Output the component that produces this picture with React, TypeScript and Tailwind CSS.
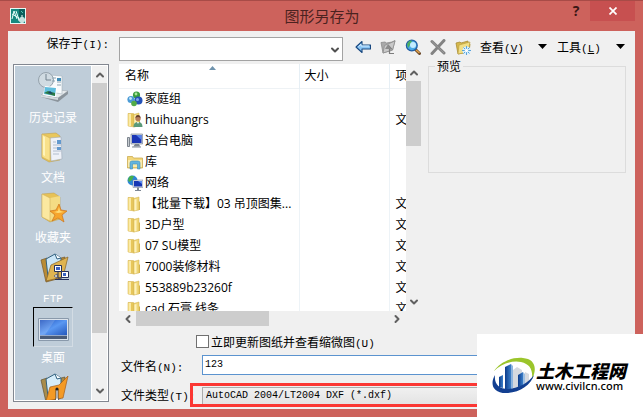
import { useState, type ReactNode } from 'react';
import { ChevronDown, ChevronLeft, ChevronRight, ChevronUp } from 'lucide-react';
import clsx from 'clsx';

type Kind = 'homegroup' | 'user' | 'computer' | 'library' | 'network' | 'folder';

interface Entry {
  name: string;
  kind: Kind;
  type?: string;
}

const entries: Entry[] = [
  { name: '家庭组', kind: 'homegroup' },
  { name: 'huihuangrs', kind: 'user', type: '文' },
  { name: '这台电脑', kind: 'computer' },
  { name: '库', kind: 'library' },
  { name: '网络', kind: 'network' },
  { name: '【批量下载】03 吊顶图集...', kind: 'folder', type: '文' },
  { name: '3D户型', kind: 'folder', type: '文' },
  { name: '07 SU模型', kind: 'folder', type: '文' },
  { name: '7000装修材料', kind: 'folder', type: '文' },
  { name: '553889b23260f', kind: 'folder', type: '文' },
  { name: 'cad 石膏 线条', kind: 'folder', type: '文' }
];

function Mono({ children }: { children: ReactNode }) {
  return (
    <span className="font-['Liberation_Mono',monospace] text-[11px] leading-none">
      {children}
    </span>
  );
}

function AppIcon() {
  return (
    <svg viewBox="0 0 16 16" className="size-4">
      <rect width="16" height="16" fill="#e9f6f3" />
      <rect x="1" y="1" width="14" height="14" fill="#17897f" />
      <path d="M9 1h6v8H9z" fill="#0b5f5c" />
      <path d="M2 11 4 3l3 8M6 3l3 9M2 6l7 4" stroke="#e9fffb" fill="none" />
      <path d="M10 10h4v4h-4zM12 7v8M8 12h7" stroke="#fff" fill="none" />
      <path d="M11 3l2 2" stroke="#54c7b6" />
    </svg>
  );
}

function BackIcon() {
  return (
    <svg viewBox="0 0 16 16" className="size-4">
      <path
        d="M1 8 7 2.5V6h8.5v4H7v3.5z"
        fill="#8cc6f5"
        stroke="#17477f"
        strokeWidth="1.1"
        strokeLinejoin="round"
      />
      <path d="M3.5 7.5 6 5.2V7h8" stroke="#d3ecff" fill="none" />
    </svg>
  );
}

function UpFolderIcon() {
  return (
    <svg viewBox="0 0 16 16" className="size-4">
      <path
        d="M1 3.500 5 3l1.500 1L12 3l3-1.500L12.500 11 3 14z"
        fill="#a9a9a9"
        stroke="#8b8b8b"
        strokeWidth=".8"
      />
      <path d="M3 14 4.500 6.500 15 2l-2.500 9z" fill="#c9c9c9" stroke="#8e8e8e" strokeWidth=".8" />
      <path d="m8 6 3.500 4H9.500v4.500H14" fill="none" stroke="#7c7c7c" strokeWidth="1.200" />
      <path d="m8 5.500 3.500 4.500H5z" fill="#8b8b8b" />
    </svg>
  );
}

function SearchWebIcon() {
  return (
    <svg viewBox="0 0 16 16" className="size-4">
      <path d="m10 10 4.5 4.5" stroke="#6d4a2b" strokeWidth="3" strokeLinecap="round" />
      <path d="m11 11 3.5 3" stroke="#e2a24a" strokeWidth="1.4" />
      <circle cx="6.8" cy="6.5" r="5.4" fill="#4aa9e6" stroke="#225fa5" strokeWidth="1.3" />
      <path d="M2 5c2-4 4-4 5-3L5 6 3 9z" fill="#4daf62" />
      <circle cx="8" cy="6" r="3" fill="#c3ecff" />
    </svg>
  );
}

function DeleteIcon() {
  return (
    <svg viewBox="0 0 16 16" className="size-4">
      <path
        d="m2 2.500 12 11.500M14 1.500 2 14.500"
        stroke="#838383"
        strokeWidth="3"
        strokeLinecap="round"
      />
      <path d="m2 2.500 12 11.500" stroke="#9b9b9b" />
    </svg>
  );
}

function NewFolderIcon() {
  return (
    <svg viewBox="0 0 16 16" className="size-4">
      <path d="M1 4 5 3l1 1 7-2v2l2 1-1 8-11 2z" fill="#d5b84b" stroke="#a98d36" strokeWidth=".8" />
      <path d="m3 15 1-9 11-3-2 10z" fill="#f2df86" stroke="#b99c3e" strokeWidth=".6" />
      <circle cx="11.5" cy="11.5" r="4" fill="#d6efff" />
      <path
        d="M11.5 7v9M7 11.5h9M8.5 8.5l6 6M14.5 8.5l-6 6"
        stroke="#4c9ad6"
        strokeWidth=".9"
      />
      <circle cx="11.5" cy="11.5" r="1.7" fill="#fff" />
    </svg>
  );
}

function Caret() {
  return (
    <svg viewBox="0 0 9 5" className="h-[5px] w-[9px]">
      <path d="M0 0h9L4.500 5z" fill="#000" />
    </svg>
  );
}

function EntryIcon({ kind }: { kind: Kind }) {
  if (kind === 'homegroup') {
    return (
      <svg viewBox="0 0 16 16" className="size-4 shrink-0">
        <circle cx="9.500" cy="4" r="3.600" fill="#3a9c3d" />
        <circle cx="4" cy="8.500" r="3.600" fill="#4b9bd6" />
        <circle cx="11.500" cy="9.500" r="4" fill="#2452b8" />
        <circle cx="7" cy="12.500" r="2.800" fill="#52ab48" />
        <circle cx="9" cy="3" r="1.400" fill="#a9e69a" />
        <circle cx="3.500" cy="7.500" r="1.400" fill="#c5e8fb" />
        <circle cx="10.500" cy="8.500" r="1.500" fill="#7da9ee" />
      </svg>
    );
  }
  if (kind === 'computer') {
    return (
      <svg viewBox="0 0 16 16" className="size-4 shrink-0">
        <path d="M.5 4.500h2v9h-2z" fill="#c7ccd1" stroke="#7d858e" />
        <path d="M4 1h11.500v10H4z" fill="#cfd6de" stroke="#6f7b8c" strokeWidth=".6" />
        <path d="M5 2h9.500v8H5z" fill="#1a35b5" />
        <path d="M9 2h5.500v5z" fill="#5480ea" />
        <path d="M8 11h4l1.500 3H6z" fill="#7d858e" />
        <path d="M5 14h9" stroke="#aab1b9" strokeWidth="1.500" />
      </svg>
    );
  }
  if (kind === 'network') {
    return (
      <svg viewBox="0 0 16 16" className="size-4 shrink-0">
        <circle cx="5.500" cy="5.500" r="5" fill="#2c86d8" />
        <path d="M2 2c2-2 4-1 5-1L5 5 2 7 1 5zM6 7l3-1-2 4z" fill="#48b04c" />
        <path d="M6 5h10v7.500H6z" fill="#dfe5ee" stroke="#6c7893" strokeWidth=".5" />
        <path d="M7 6h8v5.500H7z" fill="#1737b4" />
        <path d="M11 6h4v3z" fill="#5c8cf0" />
        <path d="M10 12.500h2V15h2v1H8v-1h2z" fill="#7c8694" />
      </svg>
    );
  }
  if (kind === 'library') {
    return (
      <svg viewBox="0 0 16 16" className="size-4 shrink-0">
        <path d="M.5 2.500h5l1 1.500h9V14H.5z" fill="#f2d77b" stroke="#c6a344" strokeWidth=".7" />
        <path d="M1 6h14v7H1z" fill="#fbebac" />
        <path d="M3 15V9q0-2 2-2h6q2 0 2 2v6h-2.500v-5h-5v5z" fill="#63b4de" stroke="#3c8fbd" strokeWidth=".6" />
      </svg>
    );
  }
  return (
    <svg viewBox="0 0 16 16" className="size-4 shrink-0">
      <path d="M1 1.500h5.500l1 1.500V15L1 14z" fill="#e7c65a" stroke="#d2ae46" strokeWidth=".5" />
      <path d="M1.500 2H4v12H1.500z" fill="#fbeaa4" />
      <path d="M6.500 2.500 12 1v13l-5.500 1z" fill="#f0d676" stroke="#cfae4a" strokeWidth=".5" />
      <path d="M7.500 3.500 9.500 3v11l-2 .5z" fill="#fdf1bd" />
      <path d="M12 5.500h1V14h-1z" fill="#d5b34b" />
      {kind === 'user' && (
        <>
          <circle cx="11" cy="6.500" r="2.700" fill="#b77d58" />
          <path d="M8.500 6q0-3 2.500-3t2.500 3Q11 4 8.500 6z" fill="#68402a" />
          <path d="M6.500 15q0-5 4.500-5t4.500 5z" fill="#5b9a78" />
          <path d="m10 10 1 2 1-2z" fill="#fff" />
        </>
      )}
    </svg>
  );
}

function HistoryIcon() {
  return (
    <svg viewBox="0 0 32 32" className="size-8">
      <path d="m4 24 9-6 18 2-10 7z" fill="#e9ecee" stroke="#9ba3aa" strokeWidth=".5" />
      <path d="M4 24v2l17 5v-4zM21 27v4l10-8v-3z" fill="#8b949c" />
      <path d="m4 24 17 3v2L4 26z" fill="#d5dbe0" />
      <path d="m13 4 12 1v18l-12-2z" fill="#f8fbfd" stroke="#a6b4bd" strokeWidth=".6" />
      <circle cx="9" cy="9" r="7.500" fill="#d0dbe2" stroke="#96a3ad" />
      <path d="M9 9V3M9 9h5" stroke="#73828e" />
      <path d="M15 7h4M15 10h3M20 11h4M20 14h4" stroke="#8ca3b1" />
      <path d="M20 7h4v3h-4z" fill="#438db7" />
      <path d="m8 15 12 1-1 10-13-2z" fill="#fff" />
      <path d="m8 16 11 1-1 8-11-2z" fill="#5fbddd" />
      <path d="m7 22 4-2 7 2v3z" fill="#2d7a43" />
      <path d="m11 22 2-2 3 3z" fill="#173f70" />
    </svg>
  );
}

function DocumentsIcon() {
  return (
    <svg viewBox="0 0 32 32" className="size-8">
      <path d="m5 3 14-1 4 3v24l-11 2-7-4z" fill="#e9c75c" stroke="#bb9a48" strokeWidth=".5" />
      <path d="m13 7 11-1 1 22-11 2z" fill="#eef1f8" stroke="#9daab7" strokeWidth=".6" />
      <path d="M16 11h3M16 14h8M16 17h8M16 20h8M16 23h6" stroke="#a9b8ca" strokeWidth=".9" />
      <path d="M20 9h4v4h-4zM20 16h4v3h-4z" fill="#6299ce" />
      <path d="m5 3 8 4v23l-8-4z" fill="#f9e18a" stroke="#c8a64d" strokeWidth=".5" />
      <path d="m6 5 2 1v19l-2-1z" fill="#fff4ba" />
    </svg>
  );
}

function FavoritesIcon() {
  return (
    <svg viewBox="0 0 32 32" className="size-8">
      <path d="m5 3 12-1 6 4v22l-10 3-8-5z" fill="#e7c257" stroke="#bf9d49" strokeWidth=".5" />
      <path d="m13 7 10-2v22l-10 3z" fill="#f4dc84" />
      <path d="m5 3 8 4v23l-8-4z" fill="#fbe8a0" stroke="#cbab54" strokeWidth=".5" />
      <path d="m22 13 2 6 6 1-5 4 2 7-6-4-6 3 3-6-5-4 6-1z" fill="#f6a52c" stroke="#cb731b" strokeWidth=".7" />
      <path d="m22 16 1 4 4 1-6 1-4-1 4-1z" fill="#ffdc76" />
    </svg>
  );
}

function FtpIcon() {
  return (
    <svg viewBox="0 0 32 32" className="size-8">
      <path d="m4 9 6-2 2 3 16-4-4 21-15 4z" fill="#b98b35" stroke="#76592b" strokeWidth=".7" />
      <path d="m9 8 9-5 6 4v13l-13 6z" fill="#cbe6f7" stroke="#31607e" />
      <path d="m18 3 2 5 4-1" fill="#fff" stroke="#31607e" />
      <path d="m9 30 5-16 17-8-5 20z" fill="#dfb451" stroke="#876326" strokeWidth=".7" />
      <path d="M17.500 14.500h7v6h-7zM24.500 20.500h7v6h-7z" fill="#fff" stroke="#25305a" />
      <path d="M19 16h4v3h-4zM26 22h3v3h-3z" fill="#3a62c2" />
      <path d="M21 21v6h4M18 28.500h14" stroke="#25305a" fill="none" />
      <path d="m17 25 3-2v4z" fill="#fff" stroke="#25305a" strokeWidth=".6" />
    </svg>
  );
}

function DesktopIcon() {
  return (
    <svg viewBox="0 0 32 32" className="size-8">
      <defs>
        <linearGradient id="screen" x1="0" y1="0" x2="1" y2="1">
          <stop stopColor="#1c50bd" />
          <stop offset=".5" stopColor="#5a98f2" />
          <stop offset="1" stopColor="#2558bd" />
        </linearGradient>
      </defs>
      <path d="M1.500 7.500h30v22h-30z" fill="#dce3eb" stroke="#8999ab" />
      <path d="M3 9h27v15H3z" fill="url(#screen)" />
      <path d="M3 9h15L8 24H3z" fill="#fff" opacity=".15" />
      <path d="M3 24h27v4H3z" fill="#4b5c77" />
      <path d="M3 24h27v1H3z" fill="#96a9c7" />
    </svg>
  );
}

function BuzzsawIcon() {
  return (
    <svg viewBox="0 0 32 32" className="size-8">
      <path d="m4 9 6-2 2 3 16-4-4 21-15 4z" fill="#a98c4b" stroke="#635533" strokeWidth=".7" />
      <path d="m9 8 9-5 6 4v13l-13 6z" fill="#d6edfa" stroke="#31607e" />
      <path d="m18 3 2 5 4-1" fill="#fff" stroke="#31607e" />
      <path d="m9 30 4-14 9-2 9-9-5 22z" fill="#f49a25" stroke="#a65d18" strokeWidth=".7" />
      <path d="M19 18v9l-2 5h6l-2-5v-9" fill="#fff" stroke="#333" strokeWidth=".8" />
      <circle cx="20" cy="18" r="1.500" fill="#222" />
    </svg>
  );
}

const places = [
  { name: '历史记录', icon: <HistoryIcon /> },
  { name: '文档', icon: <DocumentsIcon /> },
  { name: '收藏夹', icon: <FavoritesIcon /> },
  { name: 'FTP', icon: <FtpIcon /> },
  { name: '桌面', icon: <DesktopIcon /> },
  { name: 'Buzzsaw', icon: <BuzzsawIcon /> }
];

const tools = [
  { label: '返回', icon: <BackIcon /> },
  { label: '上一级', icon: <UpFolderIcon /> },
  { label: '搜索 Web', icon: <SearchWebIcon /> },
  { label: '删除', icon: <DeleteIcon /> },
  { label: '创建新文件夹', icon: <NewFolderIcon /> }
];

function VerticalScrollbar({ thumb }: { thumb: string }) {
  return (
    <div className="flex w-[15px] shrink-0 flex-col items-center bg-[#f0f0f0] text-[#606060]">
      <div className="flex h-[17px] shrink-0 items-center">
        <ChevronUp size={12} strokeWidth={4} />
      </div>
      <div className="min-h-0 w-full flex-1">
        <div className={clsx('w-full bg-[#cdcdcd]', thumb)} />
      </div>
      <div className="flex h-[19px] shrink-0 items-center">
        <ChevronDown size={12} strokeWidth={4} />
      </div>
    </div>
  );
}

function TitleBar() {
  return (
    <header className="flex h-[30px] shrink-0 items-center pl-[2px]">
      <AppIcon />
      <h1 className="flex-1 pl-[52px] text-center text-[15px] text-[#4b2220]">
        图形另存为
      </h1>
      <button
        aria-label="帮助"
        className="mr-1 w-5 self-start text-center font-['Open_Sans',sans-serif] text-sm font-bold text-[#3b1715]"
      >
        ?
      </button>
      <button
        aria-label="关闭"
        className="flex h-5 w-[45px] items-center justify-center self-start bg-[#c75050] text-white"
      >
        <svg viewBox="0 0 8 8" className="size-2">
          <path d="m.5.5 7 7m0-7-7 7" stroke="currentColor" strokeWidth="1.700" />
        </svg>
      </button>
    </header>
  );
}

function Toolbar() {
  return (
    <div className="flex h-[33px] items-center pt-[3px]">
      <div className="relative h-6 flex-1">
        <select
          id="save-in"
          className="h-full w-full appearance-none border border-[#a3a3a3] bg-white"
        />
        <ChevronDown
          size={12}
          strokeWidth={4}
          className="pointer-events-none absolute right-[2px] top-[7px] text-[#505050]"
        />
      </div>
      <div className="ml-3 flex gap-[9px] pb-1">
        {tools.map((tool) => (
          <button key={tool.label} aria-label={tool.label}>
            {tool.icon}
          </button>
        ))}
      </div>
      <button className="ml-[9px] flex w-[67px] items-center justify-between whitespace-nowrap pb-[5px] leading-4">
        <span>
          查看<Mono>(<u>V</u>)</Mono>
        </span>
        <Caret />
      </button>
      <button className="ml-[10px] mr-px flex w-[68px] items-center justify-between whitespace-nowrap pb-[5px] leading-4">
        <span>
          工具<Mono>(<u>L</u>)</Mono>
        </span>
        <Caret />
      </button>
    </div>
  );
}

function PlacesBar() {
  const [place, setPlace] = useState('桌面');

  return (
    <nav className="mb-[3px] flex min-h-0 overflow-hidden border border-[#828790] bg-white p-px">
      <div className="mr-px flex-1 overflow-hidden bg-[#bfcdd9] pt-px">
        {places.map(({ name, icon }) => (
          <button
            key={name}
            aria-label={name}
            onClick={() => setPlace(name)}
            className="flex w-full flex-col items-center leading-5 text-white"
          >
            <span
              className={clsx(
                'flex size-10 items-center justify-center border',
                place === name
                  ? 'border-l-black border-t-black border-b-[#d3dce4] border-r-[#d3dce4]'
                  : 'border-transparent'
              )}
            >
              {icon}
            </span>
            <span className="h-5">
              {name === 'FTP' && <Mono>{name}</Mono>}
              {name !== 'FTP' && name !== 'Buzzsaw' && name}
            </span>
          </button>
        ))}
      </div>
      <VerticalScrollbar thumb="h-[84%]" />
    </nav>
  );
}

function FileList() {
  return (
    <div className="flex min-w-0 flex-1">
      <div className="flex min-w-0 flex-1 flex-col">
        <div className="min-h-0 flex-1 overflow-hidden bg-white font-['Open_Sans','Noto_Sans_CJK_SC',sans-serif]">
          <table className="w-full table-fixed border-collapse text-left">
            <thead>
              <tr className="h-6 border-b border-[#eef2f5]">
                <th className="relative border-r border-[#e6eff5] p-0 pl-[6px] font-normal">
                  名称
                  <svg viewBox="0 0 7 4" className="absolute left-1/2 top-[2px] h-1 w-[7px]">
                    <path d="M0 4 3.500 0 7 4z" fill="#6f93ad" />
                  </svg>
                </th>
                <th className="w-[90px] border-r border-[#e6eff5] p-0 pl-[5px] font-normal">
                  大小
                </th>
                <th className="w-[17px] overflow-hidden whitespace-nowrap p-0 pl-[6px] font-normal">
                  项
                </th>
              </tr>
            </thead>
            <tbody>
              {entries.map((entry) => (
                <tr key={entry.name} className="h-[21px]">
                  <td className="border-r border-[#edf3f7] p-0 pl-2">
                    <div className="flex h-[21px] items-center gap-[2px] whitespace-nowrap">
                      <EntryIcon kind={entry.kind} />
                      {entry.name}
                    </div>
                  </td>
                  <td className="border-r border-[#edf3f7] p-0" />
                  <td className="overflow-hidden whitespace-nowrap p-0 pl-[6px]">
                    {entry.type}
                  </td>
                </tr>
              ))}
            </tbody>
          </table>
        </div>
        <div className="flex h-[15px] shrink-0 items-center bg-[#f0f0f0] text-[#606060]">
          <div className="flex w-[17px] justify-center">
            <ChevronLeft size={12} strokeWidth={4} />
          </div>
          <div className="h-full flex-1">
            <div className="h-full w-[53%] bg-[#cdcdcd]" />
          </div>
          <div className="flex w-[19px] justify-center">
            <ChevronRight size={12} strokeWidth={4} />
          </div>
        </div>
      </div>
      <div className="mb-[15px] flex">
        <VerticalScrollbar thumb="h-[31%]" />
      </div>
    </div>
  );
}

function SiteLogo() {
  return (
    <div className="absolute bottom-0 right-0 flex h-[83px] w-[166px] items-center bg-white pl-[14px]">
      <svg viewBox="0 0 46 38" className="h-[38px] w-[46px] shrink-0">
        <defs>
          <linearGradient id="tower" x1="0" y1="0" x2="1" y2="0">
            <stop stopColor="#0c3c8c" />
            <stop offset="1" stopColor="#3b7fc9" />
          </linearGradient>
        </defs>
        <path d="M3 14C9 5 21 0 32 1c11 1 15 9 9 21 1-9-2-15-11-17C21 3 10 7 3 14z" fill="#9bc52b" />
        <path d="m22 13 4-3 5 3v16l-9 2z" fill="#d5d9df" />
        <path d="m34 15 4 2v8l-4 2z" fill="#d5d9df" />
        <path d="m8 20 4-2v13l-4-1z" fill="url(#tower)" />
        <path d="m14 10 6-3v25h-6z" fill="url(#tower)" />
        <path d="m20 7 2 2v22l-2 1z" fill="#8db4de" />
        <path d="m27 18 5-3v14l-5 1z" fill="url(#tower)" />
        <path d="m32 15 2 2v11l-2 1z" fill="#9dbfe2" />
        <path d="M4 18C-1 26 1 36 15 36c13 0 25-8 28-18-6 8-15 13-26 14C8 32 3 27 4 18z" fill="#123f91" />
      </svg>
      <div className="-ml-px whitespace-nowrap text-black">
        <div className="text-[18px] font-black italic leading-5">土木工程网</div>
        <div className="font-['Noto_Sans',sans-serif] text-[11px] font-medium leading-3">
          www.civilcn.com
        </div>
      </div>
    </div>
  );
}

export default function App() {
  const [fileName, setFileName] = useState('123');

  return (
    <div className="relative flex h-screen min-h-80 flex-col overflow-hidden border-t border-[#a84b47] bg-[#cd625c] px-2 pb-2 font-['Noto_Sans_CJK_SC',sans-serif] text-[12px] leading-4 text-black">
      <TitleBar />
      <main className="grid min-h-0 flex-1 grid-cols-[96px_1fr] grid-rows-[33px_1fr] gap-x-[10px] bg-[#f0f0f0] pb-1 pl-[5px] pr-[9px]">
        <label htmlFor="save-in" className="pt-1 text-right">
          保存于<Mono>(I):</Mono>
        </label>
        <Toolbar />
        <PlacesBar />
        <div className="flex min-h-0 min-w-0 flex-col">
          <div className="flex min-h-0 flex-1 gap-[7px]">
            <FileList />
            <fieldset className="-mt-[6px] h-[115px] w-[198px] shrink-0 border border-[#dcdcdc] pl-[6px]">
              <legend className="px-[2px]">预览</legend>
            </fieldset>
          </div>
          <label className="flex h-[29px] shrink-0 items-center gap-[2px] pl-[77px] pt-[2px]">
            <input
              type="checkbox"
              className="size-[13px] appearance-none border border-[#707070] bg-white checked:bg-[#707070]"
            />
            <span>
              立即更新图纸并查看缩微图<Mono>(U)</Mono>
            </span>
          </label>
          <div className="grid shrink-0 grid-cols-[81px_1fr] grid-rows-[20px_20px] items-center gap-x-[2px] gap-y-[10px]">
            <label htmlFor="file-name" className="whitespace-nowrap pl-[2px] pt-[2px]">
              文件名<Mono>(N):</Mono>
            </label>
            <input
              id="file-name"
              value={fileName}
              onChange={(e) => setFileName(e.target.value)}
              className="h-5 border border-[#5b93cf] bg-white px-[2px] pb-[2px] font-['Liberation_Mono',monospace] text-[10px] outline-none"
            />
            <label htmlFor="file-type" className="whitespace-nowrap pl-[2px]">
              文件类型<Mono>(T):</Mono>
            </label>
            <div className="relative h-5">
              <select
                id="file-type"
                className="h-full w-full appearance-none border border-[#acacac] bg-linear-to-b from-[#f0f0f0] to-[#e2e2e2] px-[3px] pb-[2px] font-['Liberation_Mono',monospace] text-[10px]"
              >
                <option>AutoCAD 2004/LT2004 DXF (*.dxf)</option>
              </select>
              <div className="pointer-events-none absolute -inset-x-3 -inset-y-[2px] border-[3px] border-[#fb3733]" />
            </div>
          </div>
        </div>
      </main>
      <SiteLogo />
    </div>
  );
}
